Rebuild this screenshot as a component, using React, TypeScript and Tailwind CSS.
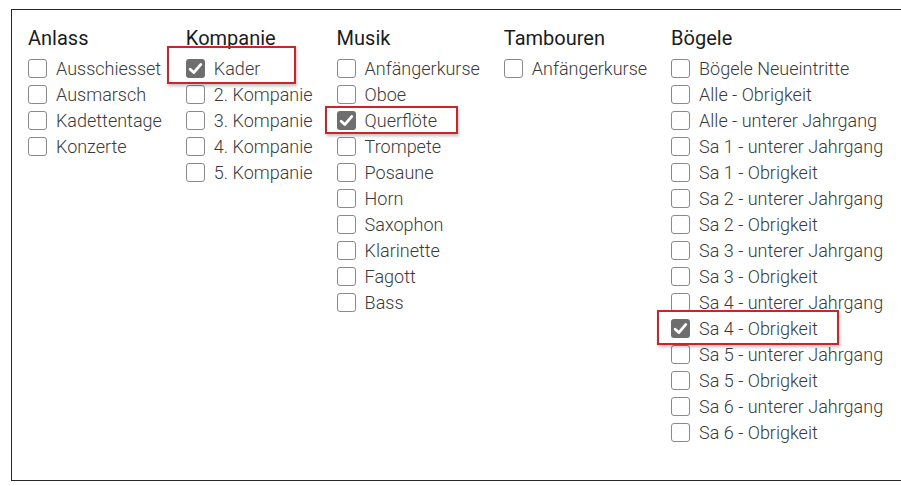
import React from "react";

type Item = { label: string; checked?: boolean };
type Group = { title: string; items: Item[] };

const groups: Group[] = [
  { title: "Anlass", items: [{ label: "Ausschiesset" }, { label: "Ausmarsch" }, { label: "Kadettentage" }, { label: "Konzerte" }] },
  {
    title: "Kompanie",
    items: [{ label: "Kader", checked: true }, { label: "2. Kompanie" }, { label: "3. Kompanie" }, { label: "4. Kompanie" }, { label: "5. Kompanie" }],
  },
  {
    title: "Musik",
    items: [
      { label: "Anfängerkurse" },
      { label: "Oboe" },
      { label: "Querflöte", checked: true },
      { label: "Trompete" },
      { label: "Posaune" },
      { label: "Horn" },
      { label: "Saxophon" },
      { label: "Klarinette" },
      { label: "Fagott" },
      { label: "Bass" },
    ],
  },
  { title: "Tambouren", items: [{ label: "Anfängerkurse" }] },
  {
    title: "Bögele",
    items: [
      { label: "Bögele Neueintritte" },
      { label: "Alle - Obrigkeit" },
      { label: "Alle - unterer Jahrgang" },
      { label: "Sa 1 - unterer Jahrgang" },
      { label: "Sa 1 - Obrigkeit" },
      { label: "Sa 2 - unterer Jahrgang" },
      { label: "Sa 2 - Obrigkeit" },
      { label: "Sa 3 - unterer Jahrgang" },
      { label: "Sa 3 - Obrigkeit" },
      { label: "Sa 4 - unterer Jahrgang" },
      { label: "Sa 4 - Obrigkeit", checked: true },
      { label: "Sa 5 - unterer Jahrgang" },
      { label: "Sa 5 - Obrigkeit" },
      { label: "Sa 6 - unterer Jahrgang" },
      { label: "Sa 6 - Obrigkeit" },
    ],
  },
];

function Box({ checked }: { checked?: boolean }) {
  if (checked) {
    return (
      <span className="flex h-[19px] w-[19px] shrink-0 items-center justify-center rounded-[3px] bg-[#6e6e6e]">
        <svg width="15" height="15" viewBox="0 0 14 14">
          <path d="M2 7.6 L5.4 10.8 L12 3.2" fill="none" stroke="#fff" strokeWidth="2.6" strokeLinecap="round" strokeLinejoin="round" />
        </svg>
      </span>
    );
  }
  return <span className="block h-[19px] w-[19px] shrink-0 rounded-[3px] border border-[#8a8a8a] bg-white" />;
}

function Highlight({ className }: { className: string }) {
  return (
    <div
      className={
        "pointer-events-none absolute border-2 border-[#c9262b] shadow-[1px_2px_3px_rgba(0,0,0,0.25)] " + className
      }
    />
  );
}

export default function App() {
  return (
    <div className="relative h-[486px] w-[901px] overflow-hidden bg-white" style={{ fontFamily: "Roboto, 'Noto Sans', sans-serif" }}>
      <div className="ml-[11px] mt-[9px] h-[472px] w-[895px] border border-r-0 border-[#24282a] pl-[16px] pt-[14px]">
        <div className="flex gap-[24px]">
          {groups.map((g) => (
            <div key={g.title} className="flex flex-col">
              <div className="h-[28px] text-[20px] leading-[28px] text-[#1c1c1c]">{g.title}</div>
              <div className="mt-[3px] flex flex-col">
                {g.items.map((it, i) => (
                  <label key={i} className="flex h-[26px] items-center gap-[9px] whitespace-nowrap text-[18px] font-light text-[#3a3a3a]">
                    <Box checked={it.checked} />
                    <span>{it.label}</span>
                  </label>
                ))}
              </div>
            </div>
          ))}
        </div>
      </div>
      <Highlight className="left-[167px] top-[46px] h-[38px] w-[129px]" />
      <Highlight className="left-[325px] top-[106px] h-[28px] w-[133px]" />
      <Highlight className="left-[657px] top-[310px] h-[35px] w-[182px]" />
    </div>
  );
}
